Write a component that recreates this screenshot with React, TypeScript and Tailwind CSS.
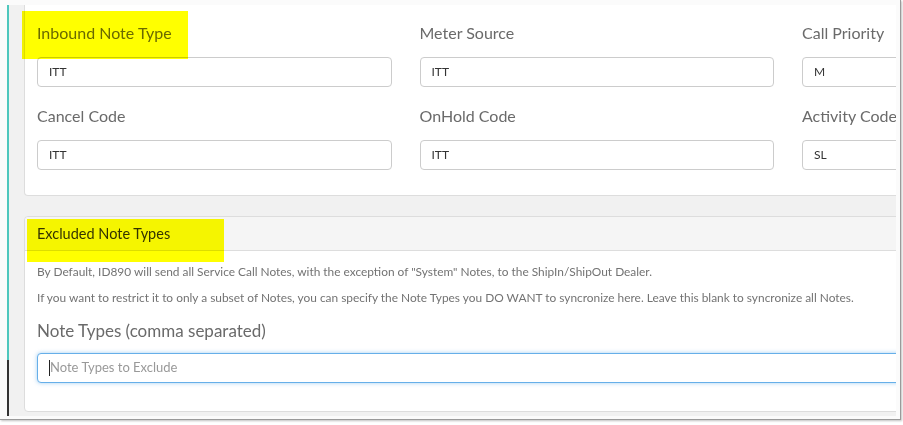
import React from "react";

const font = { fontFamily: "Lato, 'Open Sans', sans-serif" };

function Field({ label, value }: { label: string; value: string }) {
  return (
    <div className="w-[354.5px] shrink-0">
      <div className="text-[16px] leading-[24px] text-[#6a6a6a] mb-[12px] whitespace-nowrap">{label}</div>
      <div className="h-[30px] rounded-[4px] border border-[#cccccc] bg-white flex items-center pl-[11px] text-[12px] text-[#333]">
        {value}
      </div>
    </div>
  );
}

export default function App() {
  return (
    <div className="relative w-[903px] h-[425px] bg-white" style={font}>
      {/* screenshot frame */}
      <div className="flex w-[901px] h-[420px] bg-[#fbfbfb] border-r border-b border-[#9a9a9a] shadow-[1px_1px_2px_rgba(0,0,0,0.25)] pl-[7px] pt-[5px] pr-[4px] pb-[3px]">
        <div className="w-[2px] flex flex-col shrink-0">
          <div className="h-[355px] bg-[#4ec7bd]" />
          <div className="flex-1 bg-[#333]" />
        </div>
        <div className="flex-1 bg-[#f1f1f1] overflow-hidden pl-[15px]">
          <div className="w-[1000px]">
            {/* Card 1 */}
            <div className="h-[191px] bg-white border border-t-0 border-[#dddddd] rounded-b-[4px] pl-[12px] pt-[16px]">
              <div className="flex gap-[28px]">
                <Field label="Inbound Note Type" value="ITT" />
                <Field label="Meter Source" value="ITT" />
                <Field label="Call Priority" value="M" />
              </div>
              <div className="flex gap-[28px] mt-[17px]">
                <Field label="Cancel Code" value="ITT" />
                <Field label="OnHold Code" value="ITT" />
                <Field label="Activity Code" value="SL" />
              </div>
            </div>

            {/* Card 2 */}
            <div className="mt-[20px] h-[196px] bg-white border border-[#dddddd] rounded-[4px]">
              <div className="h-[34px] bg-[#f5f5f5] border-b border-[#dddddd] rounded-t-[4px] flex items-center pl-[12px] text-[14.5px] text-[#333]">
                Excluded Note Types
              </div>
              <div className="pl-[12px] pt-[12px]">
                <p className="text-[11.9px] leading-[17px] text-[#737373] mb-[9px]">
                  By Default, ID890 will send all Service Call Notes, with the exception of "System" Notes, to the ShipIn/ShipOut Dealer.
                </p>
                <p className="text-[11.9px] leading-[17px] text-[#737373]">
                  If you want to restrict it to only a subset of Notes, you can specify the Note Types you DO WANT to syncronize here. Leave this blank to syncronize all Notes.
                </p>
                <div className="text-[17px] leading-[24px] text-[#6a6a6a] mt-[13px] mb-[10px]">Note Types (comma separated)</div>
                <div className="h-[30px] rounded-[4px] border border-[#66afe9] shadow-[0_0_4px_rgba(102,175,233,0.6)] bg-white flex items-center pl-[11px] text-[13px] text-[#999]">
                  <span className="w-[1px] h-[16px] bg-[#222]" />
                  Note Types to Exclude
                </div>
              </div>
            </div>
          </div>
        </div>
      </div>

      {/* highlighter marks */}
      <div className="absolute left-[22px] top-[11px] w-[166px] h-[48px] bg-[#ffff00] mix-blend-multiply" />
      <div className="absolute left-[27px] top-[219px] w-[197px] h-[43px] bg-[#ffff00] mix-blend-multiply" />
    </div>
  );
}
